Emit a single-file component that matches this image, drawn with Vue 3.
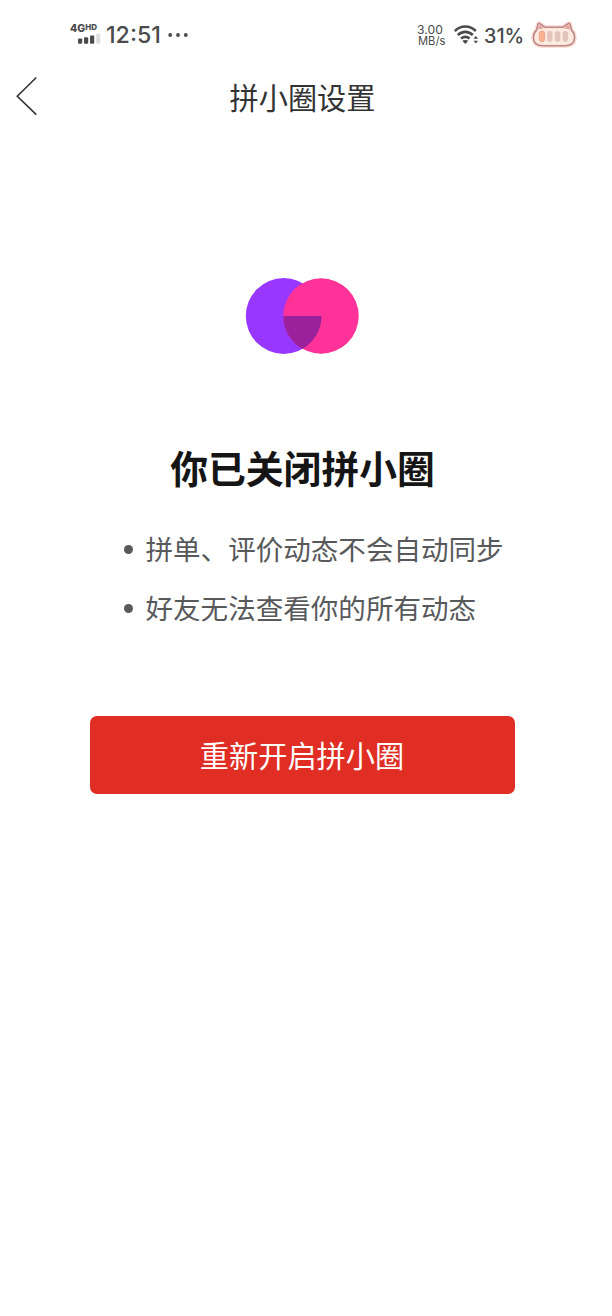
<template>
  <div class="page">
    <header class="status">
      <div class="network">
        <span class="net-type">4G<small>HD</small></span>
        <svg class="bars" width="24" height="11" viewBox="0 0 24 11">
          <rect x="0" y="5.5" width="4.2" height="5.2" rx="1" />
          <rect x="6" y="4.3" width="4.2" height="6.4" rx="1" />
          <rect x="12" y="2.5" width="4.2" height="8.2" rx="1" />
          <rect x="18.2" y="0.5" width="4.2" height="10.2" rx="1" class="off" />
        </svg>
      </div>
      <span class="clock">12:51</span>
      <svg class="more" width="20" height="6" viewBox="0 0 20 6">
        <circle cx="2.2" cy="3" r="1.9" /><circle cx="10" cy="3" r="1.9" /><circle cx="17.8" cy="3" r="1.9" />
      </svg>
      <div class="speed">3.00<br><small>MB/s</small></div>
      <svg class="wifi" width="26" height="21" viewBox="0 0 26 21">
        <g fill="none" stroke="#4a4a4a" stroke-width="2.6">
          <path d="M0.8 6C6.8 0 15.8 0 21.8 6" />
          <path d="M3.8 10C8.2 5.8 14.4 5.8 18.8 10" />
          <path d="M7 13.6C9.6 11.4 13 11.4 15.6 13.6" />
        </g>
        <path d="M8.3 15.8Q11.3 14 14.3 15.8L11.3 19Z" fill="#4a4a4a" />
        <path d="M19.5 13.8L21.8 11L24.1 13.8ZM19.5 15.8H24.1L21.8 18.6Z" fill="#4a4a4a" />
      </svg>
      <span class="percent">31%</span>
      <!-- cat shaped battery -->
      <svg class="battery" width="48" height="30" viewBox="0 0 48 30">
        <path class="glow" :d="cat" />
        <path class="cat" :d="cat" />
        <path d="M7.6 9.4L9.6 4.8L14 8.2ZM40.4 9.4L38.4 4.8L34 8.2Z" fill="#e2a39d" />
        <rect v-for="(x, i) in cells" :key="x" :x="x" y="11" width="5.4" height="10.8" rx="2.7" :class="i === 0 ? 'cell on' : 'cell'" />
      </svg>
    </header>

    <nav class="navbar">
      <svg class="back" width="24" height="40" viewBox="0 0 24 40">
        <path d="M21.3 1.5L2.3 20.2L21.3 38.6" />
      </svg>
      <h1>拼小圈设置</h1>
    </nav>

    <main>
      <svg class="logo" width="114" height="78" viewBox="0 0 114 78">
        <circle cx="38.7" cy="39" r="37.9" fill="#9837ff" />
        <circle cx="76" cy="39" r="37.7" fill="#ff3299" />
        <path d="M38.3 39H76.6A37.9 37.9 0 0 1 57.4 71.9A37.7 37.7 0 0 1 38.3 39Z" fill="#9b209b" />
      </svg>
      <h2>你已关闭拼小圈</h2>
      <ul>
        <li v-for="tip in tips" :key="tip">{{ tip }}</li>
      </ul>
      <button type="button">重新开启拼小圈</button>
    </main>
  </div>
</template>

<script setup>
const tips = ['拼单、评价动态不会自动同步', '好友无法查看你的所有动态']
const cells = [9.3, 17.1, 24.9, 32.7]
const cat = 'M6.4 10.4L8 4.2Q8.6 2.6 10.2 3.8L15.2 7.3H32.8L37.8 3.8Q39.4 2.6 40 4.2L41.6 10.4Q44.6 13 44.6 17.5C44.6 23 41.5 25.8 35 25.8H13C6.5 25.8 3.4 23 3.4 17.5Q3.4 13 6.4 10.4Z'
</script>

<style>
body { margin: 0; background: #fff }
</style>

<style scoped>
.page { width: 605px; min-height: 1316px; background: #fff; font-family: "Noto Sans CJK SC", sans-serif }

.status { display: flex; align-items: flex-start; height: 64px; padding-left: 70px; box-sizing: border-box; color: #4a4a4a; font-family: Inter, sans-serif; white-space: nowrap }
.network { display: flex; flex-direction: column; width: 31px; padding-top: 24px }
.net-type { font-size: 10.5px; line-height: 9px; font-weight: 800; display: flex; align-items: flex-start }
.net-type small { font-size: 8px; line-height: 7px; font-weight: 800 }
.bars { margin: 0 0 0 8px; fill: #4a4a4a }
.bars .off { fill: #dedede }
.clock { width: 61px; padding: 21px 0 0 5px; margin-right: -5px; font-size: 23.2px; line-height: 29px; font-weight: 450 }
.more { margin: 32px 0 0 6px; fill: #4a4a4a }
.speed { margin: 24px 0 0 229px; width: 37px; font-size: 12.2px; line-height: 11px }
.speed small { padding-left: 1px; font-size: 11.2px; line-height: 11px }
.wifi { margin: 25px 0 0 0 }
.percent { width: 45px; padding: 22px 0 0 4px; font-size: 19.8px; line-height: 28px; font-weight: 450 }
.battery { margin: 20px 0 0 1px; flex: none }
.cat { fill: #fce9e0; stroke: #bd8583; stroke-width: 1.6; stroke-linejoin: round }
.glow { fill: none; stroke: #fbe0dc; stroke-width: 4.4; stroke-linejoin: round }
.cell { fill: #e2c4bc }
.cell.on { fill: #fbb08f; stroke: #e59b80; stroke-width: .7 }

.navbar { display: grid; grid-template-columns: 60px 1fr 60px; height: 64px; align-items: center }
.back { margin-left: 15px; fill: none; stroke: #333; stroke-width: 1.6 }
h1 { margin: 0; text-align: center; font-size: 29.2px; line-height: 40px; font-weight: 400; color: #333 }

main { display: flex; flex-direction: column; align-items: center; padding-top: 149px }
.logo { display: block; margin-right: 2px }
h2 { margin: 85px 0 0; font-size: 37.8px; line-height: 54px; font-weight: 700; color: #151516 }
ul { align-self: flex-start; margin: 25px 0 0 124px; padding: 0; list-style: none }
li { display: flex; align-items: center; height: 58.5px; font-size: 27.55px; line-height: 40px; color: #58595b; white-space: nowrap }
li::before { content: ""; width: 9px; height: 9px; margin: 3px 12.5px 0 0; border-radius: 50%; background: #58595b }
button { width: 425px; height: 78px; margin: 79.5px 0 0; padding: 0 1px 2px 0; border: 0; border-radius: 7px; background: #e02e24; color: #fff; font-family: inherit; font-size: 29.2px; line-height: 76px }
</style>
